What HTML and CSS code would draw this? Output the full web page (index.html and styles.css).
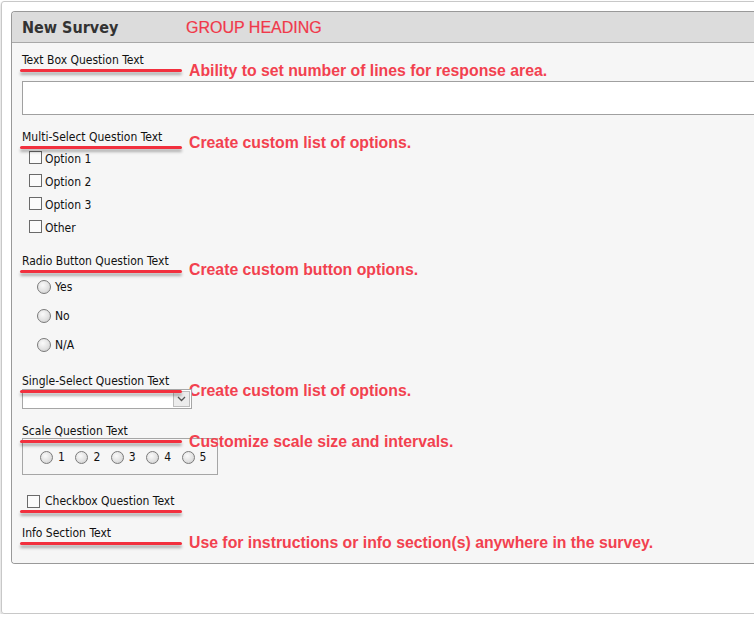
FILE: index.html
```html
<!DOCTYPE html>
<html lang="en">
<head>
    <meta charset="UTF-8">
    <meta name="viewport" content="width=device-width, initial-scale=1.0">
    <title>New Survey</title>
    <link rel="stylesheet" href="styles.css">
</head>
<body>
    <div class="frame">
        <div class="panel">
            <!-- Group heading -->
            <div class="panel-head">
                <span class="title">New Survey</span>
                <span class="group-note">GROUP HEADING</span>
            </div>

            <div class="panel-body">
                <!-- Text box -->
                <div class="question q-textbox">
                    <div class="q-label">Text Box Question Text</div>
                    <div class="note">Ability to set number of lines for response area.</div>
                    <div class="textarea"></div>
                </div>

                <!-- Multi select -->
                <div class="question q-multi">
                    <div class="q-label">Multi-Select Question Text</div>
                    <div class="note note-multi">Create custom list of options.</div>
                    <div class="check-list">
                        <div class="check-row"><span class="checkbox"></span>Option 1</div>
                        <div class="check-row"><span class="checkbox"></span>Option 2</div>
                        <div class="check-row"><span class="checkbox"></span>Option 3</div>
                        <div class="check-row"><span class="checkbox"></span>Other</div>
                    </div>
                </div>

                <!-- Radio buttons -->
                <div class="question q-radio">
                    <div class="q-label">Radio Button Question Text</div>
                    <div class="note note-radio">Create custom button options.</div>
                    <div class="radio-list">
                        <div class="radio-row"><span class="radio"></span>Yes</div>
                        <div class="radio-row"><span class="radio"></span>No</div>
                        <div class="radio-row"><span class="radio"></span>N/A</div>
                    </div>
                </div>

                <!-- Single select -->
                <div class="question q-single">
                    <div class="q-label">Single-Select Question Text</div>
                    <div class="note note-single">Create custom list of options.</div>
                    <div class="select">
                        <span class="select-btn">
                            <svg width="9" height="6" viewBox="0 0 9 6"><path d="M1 1 L4.5 4.5 L8 1" fill="none" stroke="#555" stroke-width="1.3"/></svg>
                        </span>
                    </div>
                </div>

                <!-- Scale -->
                <div class="question q-scale">
                    <div class="q-label">Scale Question Text</div>
                    <div class="note note-scale">Customize scale size and intervals.</div>
                    <div class="scale">
                        <span class="scale-item"><span class="radio small"></span>1</span>
                        <span class="scale-item"><span class="radio small"></span>2</span>
                        <span class="scale-item"><span class="radio small"></span>3</span>
                        <span class="scale-item"><span class="radio small"></span>4</span>
                        <span class="scale-item"><span class="radio small"></span>5</span>
                    </div>
                </div>

                <!-- Single checkbox -->
                <div class="question q-check">
                    <div class="q-label check-label"><span class="checkbox"></span>Checkbox Question Text</div>
                </div>

                <!-- Info section -->
                <div class="question q-info">
                    <div class="q-label">Info Section Text</div>
                    <div class="note note-info">Use for instructions or info section(s) anywhere in the survey.</div>
                </div>
            </div>
        </div>
    </div>
</body>
</html>
```

FILE: styles.css
```css
* {
    margin: 0;
    padding: 0;
    box-sizing: border-box;
}

body {
    font-family: "DejaVu Sans Condensed", "DejaVu Sans", sans-serif;
    font-stretch: condensed;
    font-size: 12px;
    color: #111;
    background-color: #fff;
    overflow: hidden;
}

.frame {
    width: calc(100% + 20px);
    height: 613px;
    margin: 1px 0 0 1px;
    padding: 9px 0 0 9px;
    border: 1px solid #c8c8c8;
    border-radius: 3px;
    box-shadow: 0 2px 3px rgba(0, 0, 0, 0.25);
}

/* Panel */
.panel {
    border: 1px solid #999;
    border-right: none;
    border-radius: 4px 0 0 4px;
    overflow: hidden;
}

.panel-head {
    display: flex;
    align-items: center;
    height: 31px;
    padding-left: 10px;
    background-color: #dcdcdc;
    border-bottom: 1px solid #a8a8a8;
}

.panel-head .title {
    width: 164px;
    font-family: "DejaVu Sans Condensed", "DejaVu Sans", sans-serif;
    font-weight: bold;
    font-size: 16px;
    color: #333;
}

.panel-head .group-note {
    font-family: "Liberation Sans", Arial, sans-serif;
    font-size: 16px;
    color: #f0384a;
    padding-top: 1px;
    -webkit-text-stroke: 0.2px #f0384a;
}

.panel-body {
    background-color: #f6f6f6;
    padding: 10px 0 23px 10px;
}

/* Questions */
.question {
    position: relative;
}

.q-label {
    position: relative;
    line-height: 14px;
}

.q-label::after {
    content: "";
    position: absolute;
    z-index: 1;
    left: -2px;
    top: 16px;
    width: 162px;
    height: 3px;
    border-radius: 2px;
    background-color: #f2303e;
    box-shadow: 0 3px 3px rgba(0, 0, 0, 0.3);
}

.note {
    position: absolute;
    left: 167px;
    top: 9px;
    font-family: "Liberation Sans", Arial, sans-serif;
    font-weight: bold;
    font-size: 15.8px;
    line-height: 18px;
    color: #f2414f;
    white-space: nowrap;
}

.note-multi {
    top: 4px;
}

.note-radio {
    top: 7px;
}

.note-single, .note-info {
    top: 8px;
}

.note-scale {
    top: 9px;
}

.q-multi {
    margin-top: 15px;
}

.q-radio {
    margin-top: 16px;
}

.q-single, .q-scale {
    margin-top: 15px;
}

.q-check {
    margin-top: 19px;
}

.q-info {
    margin-top: 18px;
}

/* Text box */
.textarea {
    height: 34px;
    margin-top: 14px;
    background-color: #fff;
    border: 1px solid #a0a0a0;
    border-right: none;
}

/* Checkboxes */
.check-list {
    margin-top: 2px;
    padding-left: 7px;
}

.check-row {
    display: flex;
    align-items: center;
    height: 23px;
    padding-top: 2px;
}

.checkbox {
    width: 13px;
    height: 13px;
    margin: -2px 3px 0 0;
    border: 1px solid #6a6a6a;
    background-color: #fbfbfb;
}

.check-label {
    display: flex;
    align-items: center;
    padding-left: 5px;
}

.check-label .checkbox {
    margin: 0 5px 0 0;
}

/* Radios */
.radio-list {
    margin-top: 4px;
    padding-left: 15px;
}

.radio-row {
    display: flex;
    align-items: center;
    height: 29px;
}

.radio {
    width: 14px;
    height: 14px;
    margin-right: 4px;
    border: 1px solid #7a7a7a;
    border-radius: 50%;
    background: radial-gradient(circle at 40% 35%, #fafafa 0%, #e2e2e2 55%, #c6c6c6 100%);
}

.radio.small {
    width: 13px;
    height: 13px;
    margin-right: 5px;
}

/* Select */
.select {
    position: relative;
    width: 170px;
    height: 20px;
    margin-top: 1px;
    background-color: #fff;
    border: 1px solid #a6a6a6;
}

.select-btn {
    position: absolute;
    top: 1px;
    right: 1px;
    bottom: 1px;
    width: 17px;
    display: flex;
    align-items: center;
    justify-content: center;
    background-color: #ececec;
    border: 1px solid #bdbdbd;
}

/* Scale */
.scale {
    display: flex;
    align-items: center;
    gap: 10px;
    width: 196px;
    height: 37px;
    padding: 1px 0 0 17px;
    border: 1px solid #a6a6a6;
}

.scale-item {
    display: flex;
    align-items: center;
    width: 25.4px;
}
```
